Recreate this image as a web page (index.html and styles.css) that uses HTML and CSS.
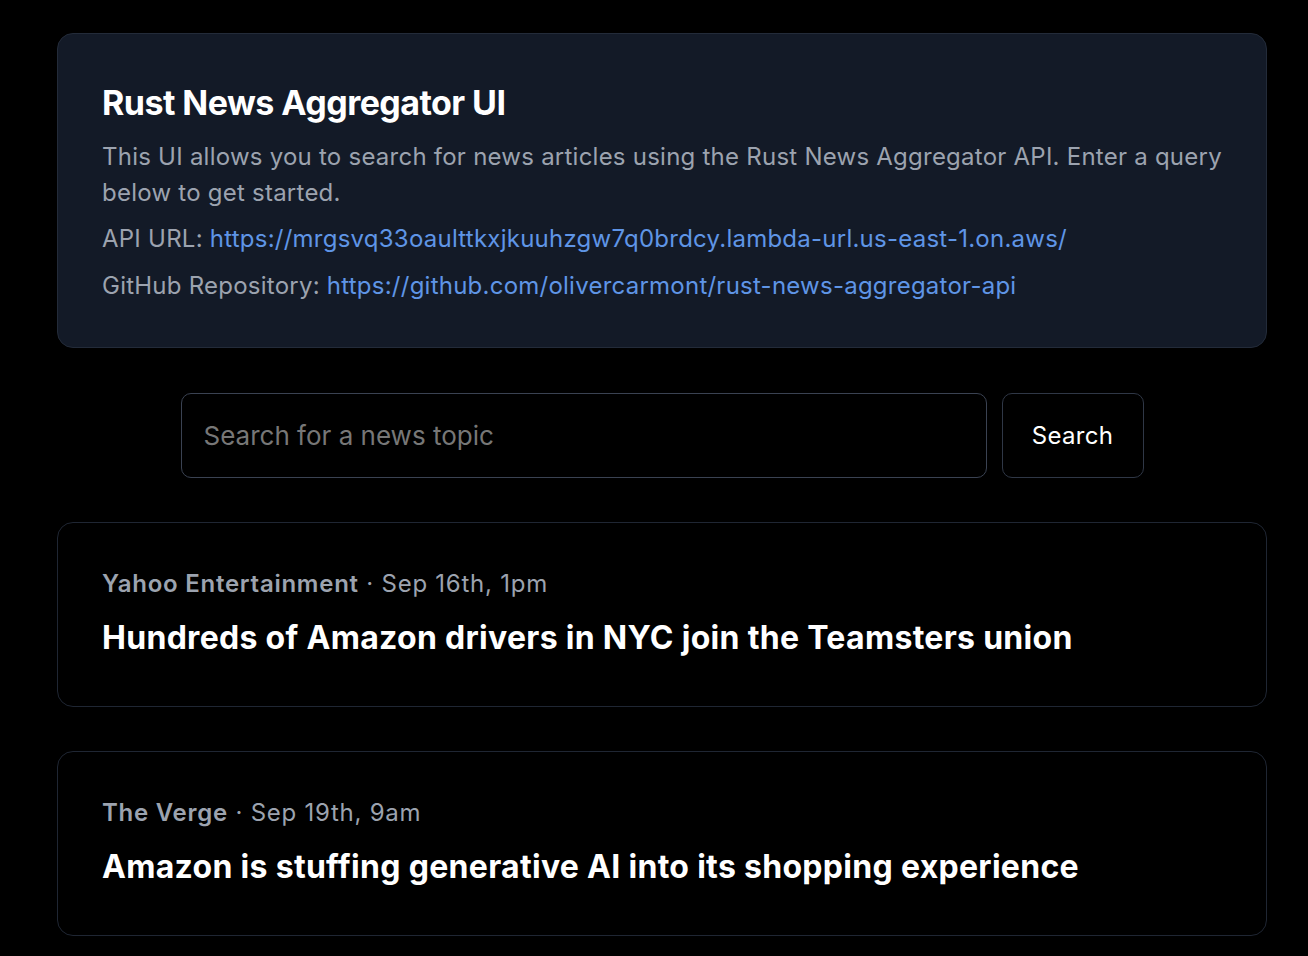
FILE: index.html
```html
<!DOCTYPE html>
<html lang="en">
<head>
<meta charset="utf-8">
<title>Rust News Aggregator UI</title>
<link rel="stylesheet" href="styles.css">
</head>
<body>
<main class="page">
  <section class="intro">
    <h1 class="intro-title">Rust News Aggregator UI</h1>
    <p class="intro-text">This UI allows you to search for news articles using the Rust News Aggregator API. Enter a query below to get started.</p>
    <p class="intro-text intro-link-row">API URL: <a class="link" href="#">https://mrgsvq33oaulttkxjkuuhzgw7q0brdcy.lambda-url.us-east-1.on.aws/</a></p>
    <p class="intro-text intro-link-row">GitHub Repository: <a class="link" href="#">https://github.com/olivercarmont/rust-news-aggregator-api</a></p>
  </section>

  <form class="search">
    <input class="search-input" type="text" placeholder="Search for a news topic">
    <button class="search-button" type="button">Search</button>
  </form>

  <section class="articles">
    <article class="article">
      <div class="article-meta"><span class="article-source">Yahoo Entertainment</span> · Sep 16th, 1pm</div>
      <h2 class="article-title">Hundreds of Amazon drivers in NYC join the Teamsters union</h2>
    </article>
    <article class="article">
      <div class="article-meta"><span class="article-source">The Verge</span> · Sep 19th, 9am</div>
      <h2 class="article-title">Amazon is stuffing generative AI into its shopping experience</h2>
    </article>
  </section>
</main>
</body>
</html>
```

FILE: styles.css
```css
* { box-sizing: border-box; }

html, body {
  margin: 0;
  background: #000;
  color: #fff;
  font-family: Inter, "Noto Sans", sans-serif;
}

.page {
  padding: 33px 41px 40px 57px;
  display: flex;
  flex-direction: column;
  gap: 44px;
}

.intro {
  background: #131a27;
  border: 1px solid #232b39;
  border-radius: 16px;
  padding: 49px 44px 43px;
}

.intro-title {
  margin: 0 0 16px;
  font-size: 34px;
  line-height: 40px;
  font-weight: 700;
  letter-spacing: -0.55px;
}

.intro-text {
  margin: 0;
  font-size: 24px;
  line-height: 36px;
  letter-spacing: 0.24px;
  color: #9ca3af;
}

.intro-link-row {
  margin-top: 10px;
}

.intro-link-row + .intro-link-row {
  margin-top: 11px;
}

.link {
  color: #5f95e6;
  text-decoration: none;
}

.search {
  display: flex;
  justify-content: center;
  gap: 15px;
  margin: 1px 0 0;
}

.search-input {
  width: 806px;
  height: 85px;
  background: #000;
  border: 1px solid #3a4252;
  border-radius: 10px;
  padding: 0 22px;
  color: #fff;
  font-family: inherit;
  font-size: 26px;
  outline: none;
}

.search-input::placeholder {
  color: #777;
}

.search-button {
  width: 142px;
  height: 85px;
  background: #000;
  border: 1px solid #2f3746;
  border-radius: 10px;
  color: #fff;
  font-family: inherit;
  font-size: 24px;
  letter-spacing: 0.3px;
}

.articles {
  display: flex;
  flex-direction: column;
  gap: 44px;
}

.article {
  border: 1px solid #1f2633;
  border-radius: 16px;
  padding: 43px 44px 48px;
}

.article-meta {
  font-size: 24px;
  line-height: 36px;
  letter-spacing: 0.75px;
  color: #9ca3af;
}

.article-source {
  font-weight: 600;
}

.article-title {
  margin: 16px 0 0;
  font-size: 32px;
  line-height: 40px;
  font-weight: 700;
  letter-spacing: 0.3px;
}
```
